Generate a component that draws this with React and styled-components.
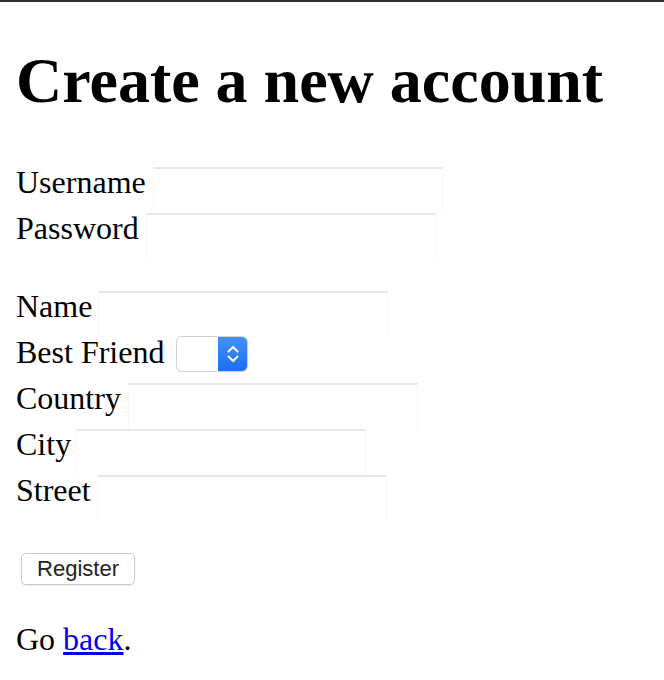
import React from 'react';
import styled, { createGlobalStyle } from 'styled-components';

// ─── Globals ────────────────────────────────────────────────────────────────

const GlobalStyle = createGlobalStyle`
  html, body {
    margin: 0;
    padding: 0;
    background: #ffffff;
  }
  body {
    font-family: "Liberation Serif", "Times New Roman", serif;
    font-size: 32px;
    color: #000000;
    border-top: 2px solid #2e2e2e;
  }
`;

// ─── Page ───────────────────────────────────────────────────────────────────

const Page = styled.div`
  padding: 0 16px 16px;
`;

const Title = styled.h1`
  font-size: 64px;
  font-weight: bold;
  margin: 42px 0 49px;
  line-height: 1.15;
`;

const Form = styled.form`
  margin: 0;
`;

const Block = styled.div`
  display: flex;
  flex-direction: column;
  margin-bottom: 32px;
`;

const Row = styled.div`
  display: flex;
  align-items: flex-start;
  height: 46px;
`;

const Label = styled.label`
  line-height: 36px;
  margin-top: -3px;
  margin-right: ${({ $space }) => $space || '7px'};
  white-space: nowrap;
`;

const TextInput = styled.input`
  box-sizing: border-box;
  width: 290px;
  height: 46px;
  margin: 0;
  padding: 2px 4px;
  border: 1px solid #f7f7f7;
  border-top: 2px solid #e8e8e8;
  border-bottom-color: #fcfcfc;
  background: #ffffff;
  font: 26px "Liberation Sans", Arial, sans-serif;
  outline: none;
`;

// ─── Select (Safari look) ───────────────────────────────────────────────────

const SelectBox = styled.div`
  display: flex;
  width: 70px;
  height: 34px;
  box-sizing: border-box;
  border-radius: 5px;
  overflow: hidden;
  box-shadow: 0 0 0 1px #d2d2d2, 0 1px 1px rgba(0, 0, 0, 0.12);
  cursor: default;
`;

const SelectValue = styled.div`
  flex: 1;
  background: #ffffff;
`;

const SelectArrow = styled.div`
  width: 29px;
  display: flex;
  align-items: center;
  justify-content: center;
  background: linear-gradient(#4391fb, #1c6ef5);
`;

// ─── Actions ────────────────────────────────────────────────────────────────

const ButtonRow = styled.div`
  display: flex;
  padding-left: 5px;
  margin-bottom: 36px;
`;

const Button = styled.button`
  box-sizing: border-box;
  width: 114px;
  height: 32px;
  padding: 0;
  border: 1px solid #c9c9c9;
  border-radius: 5px;
  background: #ffffff;
  box-shadow: 0 1px 1px rgba(0, 0, 0, 0.08);
  font: 22px "Liberation Sans", Arial, sans-serif;
  color: #222222;
`;

const Footer = styled.p`
  margin: 0;
  line-height: 36px;
`;

const Link = styled.a`
  color: #0000ee;
  text-decoration: underline;
`;

// ─── Data ───────────────────────────────────────────────────────────────────

const ACCOUNT = [
  { label: 'Username', space: '7px' },
  { label: 'Password', space: '7px', type: 'password' },
];

const PROFILE = [
  { label: 'Name', space: '6px' },
  { label: 'Best Friend', select: true },
  { label: 'Country', space: '7px' },
  { label: 'City', space: '5px' },
  { label: 'Street', space: '6px' },
];

const Chevrons = () => (
  <svg width="16" height="24" viewBox="0 0 16 24" fill="none">
    <path d="M3.5 9.5L8 5l4.5 4.5M3.5 14.5L8 19l4.5-4.5" stroke="#ffffff" strokeWidth="2" strokeLinecap="round" strokeLinejoin="round" />
  </svg>
);

const Field = ({ label, space, type, select }) => (
  <Row>
    <Label $space={select ? '13px' : space}>{label}</Label>
    {select ? (
      <SelectBox>
        <SelectValue />
        <SelectArrow>
          <Chevrons />
        </SelectArrow>
      </SelectBox>
    ) : (
      <TextInput type={type || 'text'} />
    )}
  </Row>
);

// ─── Component ──────────────────────────────────────────────────────────────

export default function App() {
  return (
    <>
      <GlobalStyle />
      <Page>
        <Title>Create a new account</Title>
        <Form onSubmit={(e) => e.preventDefault()}>
          <Block>
            {ACCOUNT.map((f) => (
              <Field key={f.label} {...f} />
            ))}
          </Block>
          <Block>
            {PROFILE.map((f) => (
              <Field key={f.label} {...f} />
            ))}
          </Block>
          <ButtonRow>
            <Button type="submit">Register</Button>
          </ButtonRow>
        </Form>
        <Footer>
          Go <Link href="#">back</Link>.
        </Footer>
      </Page>
    </>
  );
}
